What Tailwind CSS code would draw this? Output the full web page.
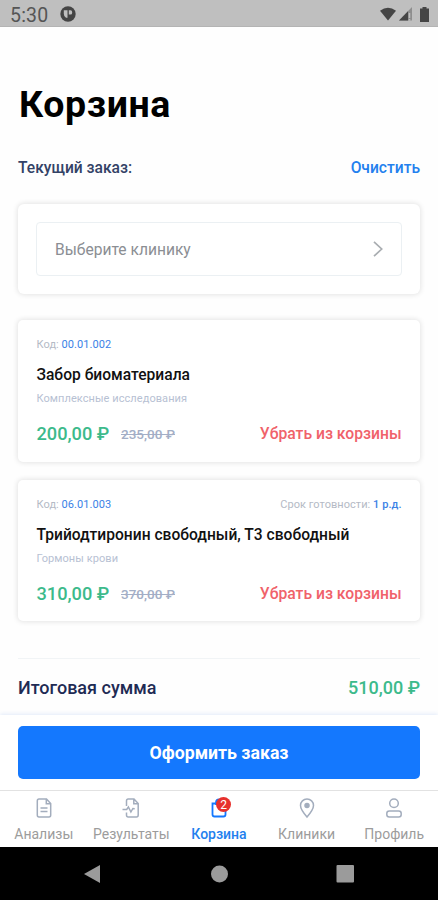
<!DOCTYPE html>
<html lang="ru">
<head>
<meta charset="utf-8">
<title>Корзина</title>
<script src="https://cdn.jsdelivr.net/npm/@tailwindcss/browser@4"></script>
</head>
<body class="bg-white">
<div class="flex h-[900px] w-[438px] flex-col overflow-hidden bg-[#fefefe] font-['Roboto',sans-serif] whitespace-nowrap">
  <header class="flex h-[27px] shrink-0 items-center border-b border-[#b4b4b4] bg-[#bfbfbf] pt-[3px] pr-[9px] pl-[10px] text-[#555]">
    <span class="pt-[2px] text-[19.5px] leading-6 tracking-[0.2px]">5:30</span>
    <svg class="mb-px ml-[12px]" width="16" height="16" viewBox="0 0 16 16"><circle cx="8" cy="8" r="7.700" fill="#454545"/><path d="M3.800 4.200h3.700v7.500h-1.500q-2.200-1-2.200-4z M8.800 4.200h1.700q1.700 0 1.700 2.200t-1.700 2.200H8.800z" fill="#bfbfbf"/></svg>
    <svg class="mb-px ml-auto" width="16" height="14" viewBox="0 0 16 14"><path d="M8 13.500 0 3.800Q8-2.500 16 3.800Z" fill="#454545"/></svg>
    <svg class="mb-px ml-[3px]" width="13" height="14" viewBox="0 0 13 14"><path d="M13 0V13.500H0Z" fill="#8e8e8e"/><path d="M9 4.200V13.500H0Z" fill="#454545"/><path d="M10.500 6v5M10.500 12v1.500" stroke="#bfbfbf" stroke-width="1.500"/></svg>
    <svg class="mb-px ml-[8px]" width="9" height="15" viewBox="0 0 9 15"><path d="M2.500 0h4v1.600H9V15H0V1.600h2.500z" fill="#454545"/></svg>
  </header>

  <main class="flex min-h-0 flex-1 flex-col px-[18px]">
    <h1 class="mt-[55px] ml-px text-[37.5px] leading-[44px] font-bold tracking-[0.6px] text-black">Корзина</h1>
    <div class="mt-[33px] flex h-5 items-center justify-between text-[15.600px] font-medium">
      <h2 class="text-[#334266]">Текущий заказ:</h2>
      <a class="text-[#2380ee]">Очистить</a>
    </div>

    <section class="mt-[25px] h-[90px] shrink-0 rounded-[6px] bg-white p-[18px] shadow-[0_0_5px_1px_rgba(0,0,0,0.10)]">
      <div class="flex h-[54px] items-center justify-between rounded-[4px] border border-[#ebf0f3] pr-[18px] pl-[18px]">
        <span class="pt-[3px] text-[15.600px] text-[#8b8e93]">Выберите клинику</span>
        <svg width="10" height="16" viewBox="0 0 10 16" fill="none" stroke="#a9adb1" stroke-width="1.700"><path d="M1 .8 8.700 8 1 15.200"/></svg>
      </div>
    </section>

    <article class="mt-[26px] h-[142px] shrink-0 rounded-[5px] bg-white px-[18.500px] pt-[17px] shadow-[0_0_5px_1px_rgba(0,0,0,0.10)]">
      <div class="flex h-4 items-center justify-between text-[11px] tracking-[0.05px] text-[#b4bac5]">
        <span>Код: <span class="text-[#3b82e6]">00.01.002</span></span>
      </div>
      <h3 class="mt-3 h-5 text-[15.600px] leading-5 font-medium text-[#111]">Забор биоматериала</h3>
      <p class="mt-[6px] h-4 text-[11px] leading-4 tracking-[0.07px] text-[#b7c1d3]">Комплексные исследования</p>
      <div class="mt-[15px] flex h-6 items-center font-medium">
        <span class="w-[84.500px] text-[18.200px] text-[#3cba8b]">200,00 ₽</span>
        <s class="text-[13.500px] text-[#a3aec6]">235,00 ₽</s>
        <a class="ml-auto text-[15.700px] text-[#f0626a]">Убрать из корзины</a>
      </div>
    </article>

    <article class="mt-[18px] h-[141px] shrink-0 rounded-[5px] bg-white px-[18.500px] pt-[17px] shadow-[0_0_5px_1px_rgba(0,0,0,0.10)]">
      <div class="flex h-4 items-center justify-between text-[11px] tracking-[0.05px] text-[#b4bac5]">
        <span>Код: <span class="text-[#3b82e6]">06.01.003</span></span>
        <span>Срок готовности: <span class="font-medium text-[#3b82e6]">1 р.д.</span></span>
      </div>
      <h3 class="mt-3 h-5 text-[15.600px] leading-5 font-medium text-[#111]">Трийодтиронин свободный, Т3 свободный</h3>
      <p class="mt-[6px] h-4 text-[11px] leading-4 tracking-[0.07px] text-[#b7c1d3]">Гормоны крови</p>
      <div class="mt-[15px] flex h-6 items-center font-medium">
        <span class="w-[84.500px] text-[18.200px] text-[#3cba8b]">310,00 ₽</span>
        <s class="text-[13.500px] text-[#a3aec6]">370,00 ₽</s>
        <a class="ml-auto text-[15.700px] text-[#f0626a]">Убрать из корзины</a>
      </div>
    </article>

    <div class="mt-[37px] flex h-[57px] shrink-0 items-center justify-between border-t border-[#f1f4f6] text-[18px] font-medium">
      <span class="text-[#1f2b54]">Итоговая сумма</span>
      <span class="text-[#3cba8b]">510,00 ₽</span>
    </div>
  </main>

  <div class="h-[75px] shrink-0 bg-white px-[18px] pt-[11px] shadow-[0_-1px_4px_rgba(60,110,220,0.14)]">
    <button class="h-[53px] w-full rounded-[5px] bg-[#1478fe] pt-px text-[17.700px] font-bold text-white">Оформить заказ</button>
  </div>

  <nav class="grid h-[57px] shrink-0 grid-cols-5 border-t border-[#e2e2e2] bg-white pt-[6px] text-center text-[14px] leading-5 text-[#9c9c9c]">
    <a class="flex flex-col items-center gap-[5px]">
      <svg width="20" height="22" viewBox="0 0 20 22" fill="none" stroke="#a3adbd" stroke-width="1.500"><path d="M12.500 2H5Q3.300 2 3.300 4v14Q3.300 20 5 20h10q1.700 0 1.700-2V6.500ZM12.300 2v4.700h4.400M6.500 11h7M6.500 14.500h7"/></svg>
      <span>Анализы</span></a>
    <a class="flex flex-col items-center gap-[5px]">
      <svg width="20" height="22" viewBox="0 0 20 22" fill="none" stroke="#a3adbd" stroke-width="1.500"><path d="M5.500 9V4q0-2 1.700-2H13l4.200 4.500V18q0 2-1.700 2H7.200q-1.700 0-1.700-2v-2.500M12.800 2v4.700h4.400M1.500 12.500h4.200l1.700-2.500 2.500 5 2-3.500 1.800.2"/></svg>
      <span>Результаты</span></a>
    <a class="relative flex flex-col items-center gap-[5px] font-medium text-[#2380ee]">
      <svg width="20" height="22" viewBox="0 0 20 22" fill="none" stroke="#1478fe" stroke-width="1.800"><path d="M3.500 6.500h13V17.500q0 2-2 2h-9q-2 0-2-2ZM7 8V5.500Q7 2.500 10 2.500t3 3V8"/></svg>
      <span class="absolute top-0 left-[41px] h-[15px] w-[15px] rounded-full bg-[#e7312d] text-[12px] leading-[16px] font-normal text-white">2</span>
      <span>Корзина</span></a>
    <a class="flex flex-col items-center gap-[5px]">
      <svg width="20" height="22" viewBox="0 0 20 22" fill="none" stroke="#a3adbd" stroke-width="1.500"><path d="M10 20Q3.500 12.500 3.500 8.500a6.500 6.500 0 0 1 13 0Q16.500 12.500 10 20Z"/><circle cx="10" cy="8.500" r="2" fill="#a3adbd"/></svg>
      <span>Клиники</span></a>
    <a class="flex flex-col items-center gap-[5px]">
      <svg width="20" height="22" viewBox="0 0 20 22" fill="none" stroke="#a3adbd" stroke-width="1.500"><circle cx="10" cy="6.300" r="4.300"/><rect x="2.800" y="14" width="14.400" height="6" rx="2.500"/></svg>
      <span>Профиль</span></a>
  </nav>

  <footer class="h-[53px] shrink-0 bg-black">
    <svg width="438" height="53" viewBox="0 0 438 53" fill="#9b9b9b"><path d="M84 27 100 18v18Z"/><circle cx="219.500" cy="27" r="8.500"/><rect x="336.500" y="18" width="17.500" height="17.500" rx="1"/></svg>
  </footer>
</div>
</body>
</html>
